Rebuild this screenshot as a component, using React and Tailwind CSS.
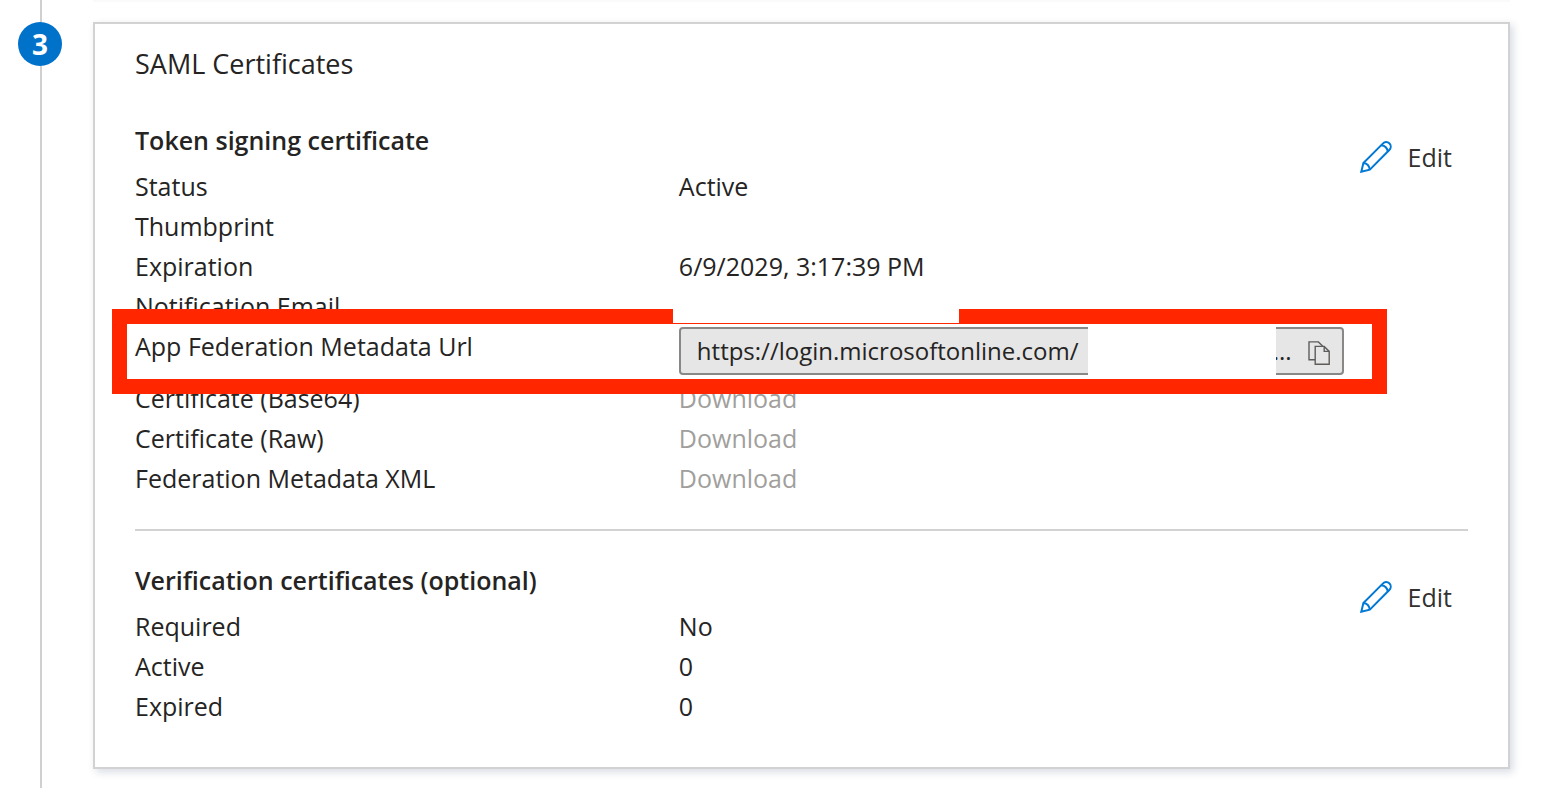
const PencilIcon = () => (
  <svg
    viewBox="0 0 32 32"
    className="h-8 w-8 shrink-0"
    fill="none"
    stroke="#0078d4"
    strokeWidth="2"
    aria-hidden="true"
  >
    <path d="M1.3 30.7 3.4 22 22.8 2.6c1.9-1.9 4.6-2.1 6.5-.3 1.9 1.9 1.9 4.8 0 6.7L9.8 28.6 1.3 30.7Z" />
    <path d="M21.2 4.2c3.4.4 6.2 3 6.6 6.5" />
    <path d="M3.4 22c3.4.4 6 3.1 6.4 6.6" />
  </svg>
);

const CopyIcon = () => (
  <svg
    viewBox="0 0 22 24"
    className="h-6 w-[22px]"
    fill="none"
    stroke="#5f5d5b"
    strokeWidth="1.4"
    aria-hidden="true"
  >
    <path d="M7 18.7H1V.9h9.4l4.4 4.4" />
    <path d="M7.2 5.4h9l5 5v12.9h-14V5.4Z" />
    <path d="M16.2 5.4v5h5" />
  </svg>
);

const EditButton = ({ label }) => (
  <button
    type="button"
    aria-label={label}
    className="flex shrink-0 cursor-pointer items-center gap-4 px-4 pt-[17px] text-[#323130]"
  >
    <PencilIcon />
    <span>Edit</span>
  </button>
);

const Row = ({ label, children }) => (
  <div className="grid min-h-10 grid-cols-[9fr_11fr]">
    <dt>{label}</dt>
    <dd className="min-w-0">{children}</dd>
  </div>
);

const DownloadButton = () => (
  <button type="button" disabled className="text-[#a19f9d]">
    Download
  </button>
);

const MetadataUrlRow = () => (
  <div className="relative grid grid-cols-[9fr_11fr] pb-1">
    <dt>
      <label htmlFor="metadata-url">App Federation Metadata Url</label>
    </dt>
    <dd className="relative flex h-12 min-w-0 items-center rounded-sm border-2 border-[#8a8886] bg-[#e6e6e6] pr-3 pl-4 text-2xl">
      <input
        id="metadata-url"
        readOnly
        value="https://login.microsoftonline.com/"
        className="min-w-0 flex-1 bg-transparent outline-none"
      />
      <span className="pr-4">...</span>
      <button type="button" aria-label="Copy to clipboard" className="mt-1 cursor-pointer">
        <CopyIcon />
      </button>
      <div className="absolute -top-[2px] right-[66px] -bottom-[2px] w-[188px] bg-white" />
    </dd>
    <div className="pointer-events-none absolute -top-[18px] -right-[43px] -bottom-[15px] -left-[23px] border-[15px] border-[#ff2600]" />
  </div>
);

export default function App() {
  return (
    <div className="flex min-h-screen gap-[31px] bg-white pr-[34px] pl-[18px] font-['Open_Sans','Noto_Sans',sans-serif] text-[25px] leading-[38px] text-[#252423]">
      <div className="flex w-11 shrink-0 flex-col">
        <div className="ml-[22px] h-[22px] w-[2px] bg-[#d2d0ce]" />
        <div className="flex h-11 w-11 items-center justify-center rounded-full bg-[#0072c9] text-[28px] font-bold text-white">
          3
        </div>
        <div className="ml-[22px] w-[2px] flex-1 bg-[#d2d0ce]" />
      </div>

      <main className="flex min-w-0 flex-1 flex-col pb-[19px]">
        <div className="mb-5 h-[2px] bg-[#fafafa]" />
        <section className="flex-1 border-2 border-[#d2d2d2] px-10 pt-5 pb-10 shadow-[3px_3px_8px_rgba(0,30,80,0.16)]">
          <h2 className="text-[27px] leading-10">SAML Certificates</h2>

          <div className="mt-[37px] flex items-start border-b-2 border-[#d2d2d2] pb-[30px]">
            <div className="min-w-0 flex-1">
              <h3 className="mb-2 font-semibold">Token signing certificate</h3>
              <dl>
                <Row label="Status">Active</Row>
                <Row label="Thumbprint" />
                <Row label="Expiration">6/9/2029, 3:17:39 PM</Row>
                <Row label="Notification Email">
                  <div className="relative z-10 -ml-[6px] h-9 w-[286px] bg-white" />
                </Row>
                <MetadataUrlRow />
                <Row label="Certificate (Base64)">
                  <DownloadButton />
                </Row>
                <Row label="Certificate (Raw)">
                  <DownloadButton />
                </Row>
                <Row label="Federation Metadata XML">
                  <DownloadButton />
                </Row>
              </dl>
            </div>
            <EditButton label="Edit token signing certificate" />
          </div>

          <div className="mt-[30px] flex items-start">
            <div className="min-w-0 flex-1">
              <h3 className="mb-2 font-semibold">
                Verification certificates (optional)
              </h3>
              <dl>
                <Row label="Required">No</Row>
                <Row label="Active">0</Row>
                <Row label="Expired">0</Row>
              </dl>
            </div>
            <EditButton label="Edit verification certificates" />
          </div>
        </section>
      </main>
    </div>
  );
}
